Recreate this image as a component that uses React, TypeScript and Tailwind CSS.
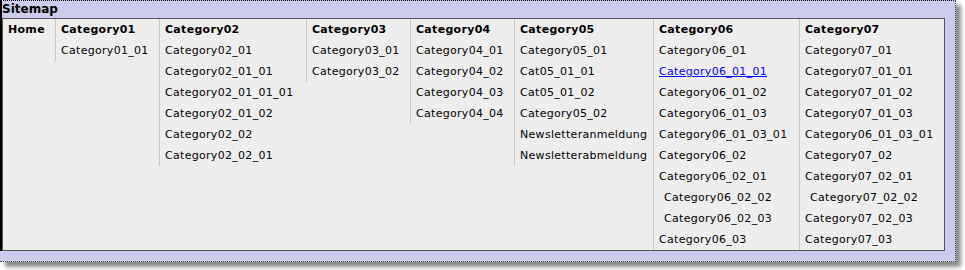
type Item = { label: string; indent?: boolean; link?: boolean }
type Column = { title: string; width: string; items: Item[] }

const columns: Column[] = [
  { title: 'Home', width: 'w-[52px]', items: [] },
  {
    title: 'Category01',
    width: 'w-[104px]',
    items: [{ label: 'Category01_01' }],
  },
  {
    title: 'Category02',
    width: 'w-[147px]',
    items: [
      { label: 'Category02_01' },
      { label: 'Category02_01_01' },
      { label: 'Category02_01_01_01' },
      { label: 'Category02_01_02' },
      { label: 'Category02_02' },
      { label: 'Category02_02_01' },
    ],
  },
  {
    title: 'Category03',
    width: 'w-[104px]',
    items: [{ label: 'Category03_01' }, { label: 'Category03_02' }],
  },
  {
    title: 'Category04',
    width: 'w-[104px]',
    items: [
      { label: 'Category04_01' },
      { label: 'Category04_02' },
      { label: 'Category04_03' },
      { label: 'Category04_04' },
    ],
  },
  {
    title: 'Category05',
    width: 'w-[139px]',
    items: [
      { label: 'Category05_01' },
      { label: 'Cat05_01_01' },
      { label: 'Cat05_01_02' },
      { label: 'Category05_02' },
      { label: 'Newsletteranmeldung' },
      { label: 'Newsletterabmeldung' },
    ],
  },
  {
    title: 'Category06',
    width: 'w-[146px]',
    items: [
      { label: 'Category06_01' },
      { label: 'Category06_01_01', link: true },
      { label: 'Category06_01_02' },
      { label: 'Category06_01_03' },
      { label: 'Category06_01_03_01' },
      { label: 'Category06_02' },
      { label: 'Category06_02_01' },
      { label: 'Category06_02_02', indent: true },
      { label: 'Category06_02_03', indent: true },
      { label: 'Category06_03' },
    ],
  },
  {
    title: 'Category07',
    width: 'w-[145px]',
    items: [
      { label: 'Category07_01' },
      { label: 'Category07_01_01' },
      { label: 'Category07_01_02' },
      { label: 'Category07_01_03' },
      { label: 'Category06_01_03_01' },
      { label: 'Category07_02' },
      { label: 'Category07_02_01' },
      { label: 'Category07_02_02', indent: true },
      { label: 'Category07_02_03' },
      { label: 'Category07_03' },
    ],
  },
]

export default function App() {
  return (
    <div className="w-[965px] h-[270px] bg-white font-['DejaVu_Sans',Verdana,sans-serif] text-black">
      <div className="w-[956px] h-[262px] bg-[#ccccee] border-t border-t-black border-r border-b border-dotted border-r-[#444] border-b-[#444] shadow-[5px_5px_4px_rgba(0,0,0,0.45)]">
        <div className="border-l-2 border-l-black">
          {/* title bar */}
          <div className="h-[17px] leading-[17px] text-[12px] font-bold">Sitemap</div>

          {/* sitemap panel */}
          <div className="w-[943px] h-[233px] border border-[#555] bg-[#eeeeee] flex items-start">
            {columns.map((col, i) => (
              <div
                key={col.title}
                className={`${col.width} shrink-0 ${i > 0 ? 'border-l border-[#c8c8c8]' : ''}`}
              >
                <div className="h-[21px] leading-[21px] pl-[5px] text-[11px] font-bold tracking-[0.3px] whitespace-nowrap">
                  {col.title}
                </div>
                {col.items.map((item) => (
                  <div
                    key={item.label + col.title}
                    className={`h-[21px] leading-[21px] text-[11px] tracking-[0.3px] whitespace-nowrap ${item.indent ? 'pl-[10px]' : 'pl-[5px]'}`}
                  >
                    {item.link ? (
                      <a href="#" className="text-[#0000ff] underline">
                        {item.label}
                      </a>
                    ) : (
                      item.label
                    )}
                  </div>
                ))}
              </div>
            ))}
          </div>
        </div>
      </div>
    </div>
  )
}
